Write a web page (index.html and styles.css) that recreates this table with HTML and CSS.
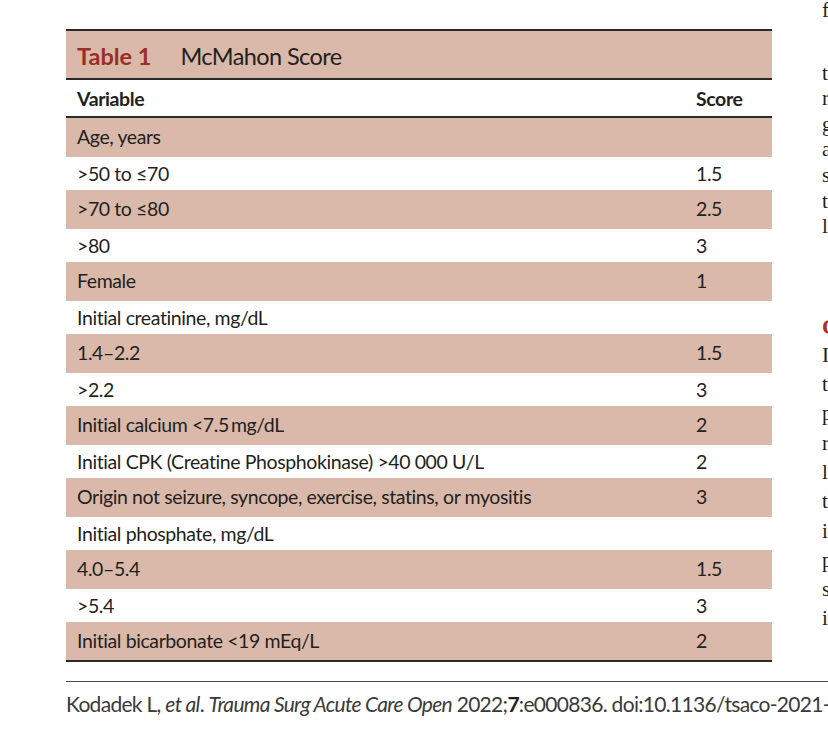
FILE: index.html
```html
<!DOCTYPE html>
<html>
<head>
<meta charset="utf-8">
<link rel="stylesheet" href="styles.css">
</head>
<body>
<div class="page">
  <div class="main">
    <table class="score-table">
      <colgroup><col class="c-var"><col class="c-score"></colgroup>
      <thead>
        <tr class="title-row">
          <th colspan="2"><span class="t-label">Table 1</span><span class="t-name">McMahon Score</span></th>
        </tr>
        <tr class="head-row">
          <th>Variable</th>
          <th>Score</th>
        </tr>
      </thead>
      <tbody>
        <tr><td>Age, years</td><td></td></tr>
        <tr><td>&gt;50 to ≤70</td><td>1.5</td></tr>
        <tr><td>&gt;70 to ≤80</td><td>2.5</td></tr>
        <tr><td>&gt;80</td><td>3</td></tr>
        <tr><td>Female</td><td>1</td></tr>
        <tr><td>Initial creatinine, mg/dL</td><td></td></tr>
        <tr><td>1.4–2.2</td><td>1.5</td></tr>
        <tr><td>&gt;2.2</td><td>3</td></tr>
        <tr><td>Initial calcium &lt;7.5&#8201;mg/dL</td><td>2</td></tr>
        <tr><td>Initial CPK (Creatine Phosphokinase) &gt;40 000 U/L</td><td>2</td></tr>
        <tr><td>Origin not seizure, syncope, exercise, statins, or myositis</td><td>3</td></tr>
        <tr><td>Initial phosphate, mg/dL</td><td></td></tr>
        <tr><td>4.0–5.4</td><td>1.5</td></tr>
        <tr><td>&gt;5.4</td><td>3</td></tr>
        <tr><td>Initial bicarbonate &lt;19 mEq/L</td><td>2</td></tr>
      </tbody>
    </table>
  </div>
  <div class="aside">
    <div class="para p1">
      <div>from the</div>
      <div class="gap"></div>
      <div>the study</div>
      <div>rhabdomyolysis</div>
      <div>group and</div>
      <div>and the</div>
      <div>significant</div>
      <div>the score</div>
      <div>length</div>
    </div>
    <div class="heading">Conclusion</div>
    <div class="para p2">
      <div>In this</div>
      <div>the score</div>
      <div>predicts</div>
      <div>renal</div>
      <div>lower</div>
      <div>than</div>
      <div>in the</div>
      <div>patients</div>
      <div>score</div>
      <div>in the</div>
    </div>
  </div>
</div>
<footer class="foot">
  <p>Kodadek L, <i>et al</i>. <i>Trauma Surg Acute Care Open</i> 2022;<b>7</b>:e000836. doi:10.1136/tsaco-2021-000836</p>
</footer>
</body>
</html>
```
FILE: styles.css
```css
html, body {
  margin: 0;
  padding: 0;
  background: #ffffff;
}
body {
  width: 828px;
  height: 738px;
  overflow: hidden;
}
.page {
  display: flex;
  width: 1200px;
  height: 670px;
}
.main {
  flex: none;
  width: 706px;
  padding: 29px 50px 0 66px;
}
.score-table {
  width: 706px;
  border-collapse: collapse;
  table-layout: fixed;
  font-family: "Lato", "Liberation Sans", sans-serif;
  font-size: 19.5px;
  color: #231f20;
  letter-spacing: -0.4px;
}
.c-var { width: 619px; }
.c-score { width: 87px; }
.score-table th,
.score-table td {
  padding: 0 0 0 11px;
  text-align: left;
  white-space: nowrap;
}
.title-row th {
  background: #dab9aa;
  border-top: 2px solid #2a2a2a;
  border-bottom: 2px solid #2a2a2a;
  height: 45px;
  font-weight: 400;
  font-size: 23.5px;
  padding-top: 2px;
}
.t-label {
  color: #9b2f26;
  font-weight: 700;
  letter-spacing: 0;
  margin-right: 29px;
}
.t-name {
  color: #231f20;
  letter-spacing: -0.6px;
}
.head-row th {
  background: #ffffff;
  height: 36px;
  border-bottom: 2px solid #2a2a2a;
  font-weight: 700;
}
.score-table tbody tr:nth-child(odd) td {
  background: #dab9aa;
  height: 37px;
  padding-bottom: 2px;
}
.score-table tbody tr:nth-child(even) td {
  background: #ffffff;
  height: 33px;
}
.score-table tbody tr:last-child td {
  border-bottom: 2px solid #2a2a2a;
  height: 36px;
}
.aside {
  flex: none;
  width: 300px;
  font-family: "Liberation Serif", serif;
  font-size: 21px;
  color: #231f20;
  white-space: nowrap;
}
.p1 {
  margin-top: -2px;
  line-height: 25.6px;
}
.gap {
  height: 37px;
}
.heading {
  margin-top: 72px;
  line-height: 29px;
  font-size: 22px;
  font-weight: 700;
  color: #a8322a;
}
.p2 {
  line-height: 29.3px;
}
.foot {
  margin-left: 66px;
  width: 900px;
  border-top: 1.5px solid #4a4a4a;
  margin-top: 11px;
}
.foot p {
  margin: 0;
  padding-top: 7px;
  font-family: "Lato", "Liberation Sans", sans-serif;
  font-size: 21px;
  line-height: 30px;
  color: #3a3a3a;
  white-space: nowrap;
  letter-spacing: -0.7px;
}
.foot b {
  font-weight: 700;
  color: #231f20;
}
```
